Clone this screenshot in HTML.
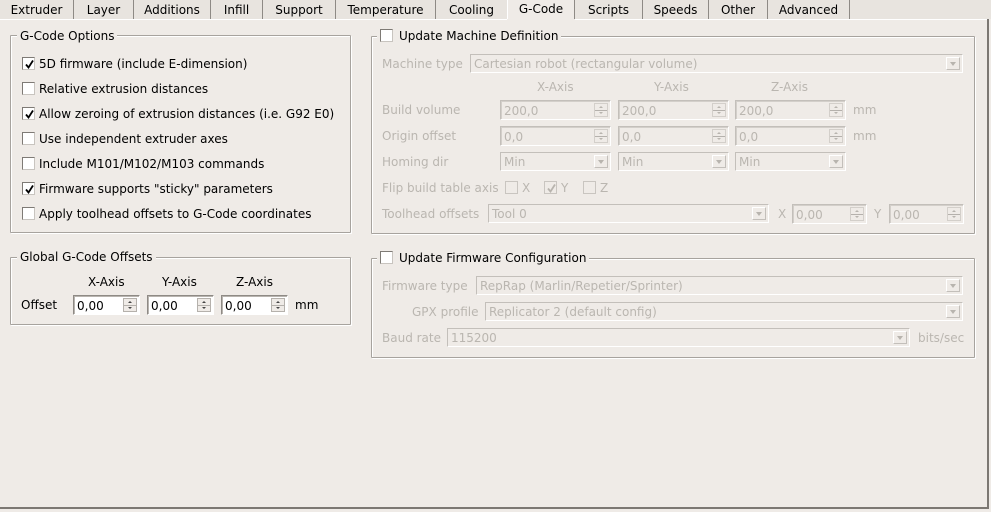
<!DOCTYPE html>
<html><head><meta charset="utf-8"><style>
*{box-sizing:border-box}
body{margin:0;width:991px;height:512px;background:#efebe7;position:relative;overflow:hidden;font:12px "DejaVu Sans",sans-serif;color:#000}
.a{position:absolute}
.t{position:absolute;white-space:nowrap;line-height:14px;margin-top:1px}
.d{color:#bab6b0}
.gb{position:absolute;border:1px solid #a7a39e;border-radius:1px;box-shadow:1px 1px 0 #fff inset,1px 1px 0 #fff}
.gt{position:absolute;background:#efebe7;padding:0 3px;line-height:14px;white-space:nowrap;margin-top:1px}
.cb{position:absolute;width:13px;height:13px;border:1px solid #7e7a75;border-right-color:#c8c4bf;border-bottom-color:#c8c4bf;background:#fff}
.cb.dis{background:#efebe7;border-color:#c9c5c0}
.cb svg{position:absolute;left:1px;top:1px}
.sp{position:absolute;height:20px;background:#fff;border:1px solid #fff;border-top-color:#8e8a85;border-left-color:#8e8a85;box-shadow:inset 1px 1px 0 #b8b4af}
.sp span{position:absolute;left:3px;top:3px;line-height:14px}
.sp i{position:absolute;right:2px;top:2px;width:14px;height:14px;background:#efebe7;border:1px solid #b5b1ac}
.sp i:before{content:"";position:absolute;left:4px;top:2px;border:2px solid transparent;border-bottom-color:#444;border-top:0}
.sp i:after{content:"";position:absolute;left:4px;top:8px;border:2px solid transparent;border-top-color:#444;border-bottom:0}
.sp i b{position:absolute;left:0;right:0;top:6px;border-top:1px solid #b5b1ac}
.sp.dis{background:#efebe7;border-color:#fff;border-top-color:#c3bfba;border-left-color:#c3bfba;box-shadow:inset 1px 1px 0 #d3cfca;color:#bab6b0}
.sp.dis i{border-color:#d3cfca}
.sp.dis i:before{border-bottom-color:#b8b4ae}.sp.dis i:after{border-top-color:#b8b4ae}
.co{position:absolute;height:19px;border:1px solid #fff;border-top-color:#c3bfba;border-left-color:#c3bfba;color:#bab6b0}
.co span{position:absolute;left:3px;top:2px;line-height:14px;white-space:nowrap}
.co i{position:absolute;right:2px;top:2px;width:14px;height:13px;border:1px solid #fff;border-right-color:#c3bfba;border-bottom-color:#c3bfba}
.co i:after{content:"";position:absolute;left:3px;top:4px;border:3px solid transparent;border-top:4px solid #b8b4ae;border-bottom:0}
.tab{position:absolute;top:0;height:19px;line-height:21px;text-align:center;border-right:1px solid #8e8a85}
</style></head><body>
<div class="a" style="left:0;top:0;width:991px;height:19px;background:#e8e4df"></div>
<div class="tab" style="left:0;width:74px">Extruder</div>
<div class="tab" style="left:74px;width:60px">Layer</div>
<div class="tab" style="left:134px;width:77px">Additions</div>
<div class="tab" style="left:211px;width:52px">Infill</div>
<div class="tab" style="left:263px;width:73px">Support</div>
<div class="tab" style="left:336px;width:100px">Temperature</div>
<div class="tab" style="left:436px;width:71px;border-right:none">Cooling</div>
<div class="tab" style="left:507px;width:68px;background:#efebe7;border-left:1px solid #fff;height:20px;top:-1px;line-height:21px">G-Code</div>
<div class="tab" style="left:575px;width:68px">Scripts</div>
<div class="tab" style="left:643px;width:66px">Speeds</div>
<div class="tab" style="left:709px;width:59px">Other</div>
<div class="tab" style="left:768px;width:82px">Advanced</div>
<div class="a" style="left:0;top:19px;width:507px;border-top:1px solid #fff"></div>
<div class="a" style="left:575px;top:19px;width:413px;border-top:1px solid #fff"></div>
<div class="a" style="left:987px;top:19px;width:2px;height:490px;background:#7c7873"></div>
<div class="a" style="left:0;top:507px;width:989px;height:2px;background:#7c7873"></div>

<div class="gb" style="left:10px;top:35px;width:341px;height:198px"></div>
<div class="gt" style="left:17px;top:28px">G-Code Options</div>
<div class="cb" style="left:22px;top:57px"><svg width="11" height="11"><path d="M2 5.5L4.5 8.5L9 1.5" fill="none" stroke="#000" stroke-width="1.8"/></svg></div>
<div class="t" style="left:39px;top:56px">5D firmware (include E-dimension)</div>
<div class="cb" style="left:22px;top:82px"></div>
<div class="t" style="left:39px;top:81px">Relative extrusion distances</div>
<div class="cb" style="left:22px;top:107px"><svg width="11" height="11"><path d="M2 5.5L4.5 8.5L9 1.5" fill="none" stroke="#000" stroke-width="1.8"/></svg></div>
<div class="t" style="left:39px;top:106px">Allow zeroing of extrusion distances (i.e. G92 E0)</div>
<div class="cb" style="left:22px;top:132px"></div>
<div class="t" style="left:39px;top:131px">Use independent extruder axes</div>
<div class="cb" style="left:22px;top:157px"></div>
<div class="t" style="left:39px;top:156px">Include M101/M102/M103 commands</div>
<div class="cb" style="left:22px;top:182px"><svg width="11" height="11"><path d="M2 5.5L4.5 8.5L9 1.5" fill="none" stroke="#000" stroke-width="1.8"/></svg></div>
<div class="t" style="left:39px;top:181px">Firmware supports "sticky" parameters</div>
<div class="cb" style="left:22px;top:207px"></div>
<div class="t" style="left:39px;top:206px">Apply toolhead offsets to G-Code coordinates</div>

<div class="gb" style="left:10px;top:257px;width:341px;height:68px"></div>
<div class="gt" style="left:17px;top:249px">Global G-Code Offsets</div>
<div class="t" style="left:88px;top:274px">X-Axis</div>
<div class="t" style="left:162px;top:274px">Y-Axis</div>
<div class="t" style="left:236px;top:274px">Z-Axis</div>
<div class="t" style="left:21px;top:297px">Offset</div>
<div class="sp" style="left:73px;top:295px;width:67px"><span>0,00</span><i><b></b></i></div>
<div class="sp" style="left:147px;top:295px;width:67px"><span>0,00</span><i><b></b></i></div>
<div class="sp" style="left:221px;top:295px;width:67px"><span>0,00</span><i><b></b></i></div>
<div class="t" style="left:295px;top:297px">mm</div>

<div class="gb" style="left:371px;top:36px;width:604px;height:198px"></div>
<div class="gt" style="left:377px;top:28px;padding-left:22px">Update Machine Definition</div>
<div class="cb" style="left:380px;top:29px"></div>
<div class="t d" style="left:382px;top:56px">Machine type</div>
<div class="co" style="left:470px;top:54px;width:493px"><span>Cartesian robot (rectangular volume)</span><i></i></div>
<div class="t d" style="left:537px;top:79px">X-Axis</div>
<div class="t d" style="left:654px;top:79px">Y-Axis</div>
<div class="t d" style="left:771px;top:79px">Z-Axis</div>
<div class="t d" style="left:382px;top:102px">Build volume</div>
<div class="sp dis" style="left:500px;top:100px;width:111px"><span>200,0</span><i><b></b></i></div>
<div class="sp dis" style="left:618px;top:100px;width:111px"><span>200,0</span><i><b></b></i></div>
<div class="sp dis" style="left:735px;top:100px;width:111px"><span>200,0</span><i><b></b></i></div>
<div class="t d" style="left:853px;top:102px">mm</div>
<div class="t d" style="left:382px;top:128px">Origin offset</div>
<div class="sp dis" style="left:500px;top:126px;width:111px"><span>0,0</span><i><b></b></i></div>
<div class="sp dis" style="left:618px;top:126px;width:111px"><span>0,0</span><i><b></b></i></div>
<div class="sp dis" style="left:735px;top:126px;width:111px"><span>0,0</span><i><b></b></i></div>
<div class="t d" style="left:853px;top:128px">mm</div>
<div class="t d" style="left:382px;top:154px">Homing dir</div>
<div class="co" style="left:500px;top:152px;width:111px"><span>Min</span><i></i></div>
<div class="co" style="left:618px;top:152px;width:111px"><span>Min</span><i></i></div>
<div class="co" style="left:735px;top:152px;width:111px"><span>Min</span><i></i></div>
<div class="t d" style="left:382px;top:180px">Flip build table axis</div>
<div class="cb dis" style="left:505px;top:181px"></div><div class="t d" style="left:522px;top:180px">X</div>
<div class="cb dis" style="left:544px;top:181px"><svg width="11" height="11"><path d="M2 5.5L4.5 8.5L9 1.5" fill="none" stroke="#b8b4ae" stroke-width="1.8"/></svg></div><div class="t d" style="left:561px;top:180px">Y</div>
<div class="cb dis" style="left:583px;top:181px"></div><div class="t d" style="left:600px;top:180px">Z</div>
<div class="t d" style="left:382px;top:206px">Toolhead offsets</div>
<div class="co" style="left:488px;top:204px;width:281px"><span>Tool 0</span><i></i></div>
<div class="t d" style="left:778px;top:206px">X</div>
<div class="sp dis" style="left:792px;top:204px;width:75px"><span>0,00</span><i><b></b></i></div>
<div class="t d" style="left:874px;top:206px">Y</div>
<div class="sp dis" style="left:889px;top:204px;width:75px"><span>0,00</span><i><b></b></i></div>

<div class="gb" style="left:371px;top:258px;width:604px;height:100px"></div>
<div class="gt" style="left:377px;top:250px;padding-left:22px">Update Firmware Configuration</div>
<div class="cb" style="left:380px;top:251px"></div>
<div class="t d" style="left:382px;top:278px">Firmware type</div>
<div class="co" style="left:476px;top:276px;width:487px"><span>RepRap (Marlin/Repetier/Sprinter)</span><i></i></div>
<div class="t d" style="left:412px;top:304px">GPX profile</div>
<div class="co" style="left:485px;top:302px;width:478px"><span>Replicator 2 (default config)</span><i></i></div>
<div class="t d" style="left:382px;top:330px">Baud rate</div>
<div class="co" style="left:447px;top:328px;width:463px"><span>115200</span><i></i></div>
<div class="t d" style="left:918px;top:330px">bits/sec</div>
</body></html>
